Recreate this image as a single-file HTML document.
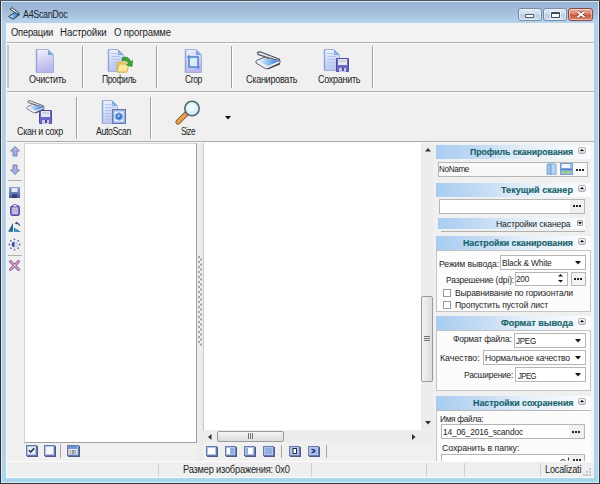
<!DOCTYPE html>
<html><head><meta charset="utf-8"><style>
html,body{margin:0;padding:0;width:600px;height:484px;overflow:hidden;background:#f0f0f0;font-family:"Liberation Sans", sans-serif;}
.t{position:absolute;line-height:1;white-space:pre;transform-origin:0 0;}
svg{overflow:visible}
</style></head><body>
<div style="position:absolute;left:0px;top:0px;width:600px;height:484px;background:#2c3238"></div>
<div style="position:absolute;left:0px;top:0px;width:600px;height:1px;background:#50565e"></div>
<div style="position:absolute;left:1px;top:1px;width:598px;height:482px;background:#dde9f4"></div>
<div style="position:absolute;left:2px;top:2px;width:596px;height:480px;background:linear-gradient(#b4cfe8 0%,#b4d0e8 95%,#a6d8ec 100%)"></div>
<div style="position:absolute;left:2px;top:2px;width:596px;height:21px;background:linear-gradient(#94b4d4 0%,#a4bcd8 45%,#accae4 75%,#b6d4ee 100%)"></div>
<div style="position:absolute;left:6px;top:23px;width:588px;height:455px;background:#f0f0f0"></div>
<svg style="position:absolute;left:8px;top:7px" width="12" height="13" viewBox="0 0 12 13"><defs><linearGradient id="tig" x1="0" y1="0" x2="1" y2="0"><stop offset="0" stop-color="#f4f8fc"/><stop offset="0.5" stop-color="#6aa8ec"/><stop offset="1" stop-color="#1a5ac8"/></linearGradient></defs>
<path d="M2 2 L4 0.7 L11.3 6.3 L9.8 7.6 Z" fill="#f0f2f6" stroke="#2e3a4c" stroke-width="1"/>
<path d="M0.6 9.6 L6.8 5.6 L11.4 7.8 L5.2 12.2 Z" fill="url(#tig)" stroke="#2e3a4c" stroke-width="1"/></svg>
<div style="position:absolute;left:518px;top:8px;width:24px;height:13px;box-sizing:border-box;border:1px solid #7a8ca4;border-radius:3px;background:linear-gradient(#dfe9f5 0%,#cfdcec 45%,#b9cde4 55%,#c9dcf0 100%);box-shadow:inset 0 0 0 1px rgba(255,255,255,0.45)"></div>
<div style="position:absolute;left:525px;top:14px;width:9px;height:4px;box-sizing:border-box;border:1px solid #4a5565;background:#fff;border-radius:1px"></div>
<div style="position:absolute;left:543px;top:8px;width:24px;height:13px;box-sizing:border-box;border:1px solid #7a8ca4;border-radius:3px;background:linear-gradient(#dfe9f5 0%,#cfdcec 45%,#b9cde4 55%,#c9dcf0 100%);box-shadow:inset 0 0 0 1px rgba(255,255,255,0.45)"></div>
<div style="position:absolute;left:551px;top:12px;width:9px;height:6px;box-sizing:border-box;border:1px solid #3e4a5a;border-top-width:2px;background:#fff;border-radius:1px"></div>
<div style="position:absolute;left:550px;top:11px;width:11px;height:8px;box-sizing:border-box;border:1px solid rgba(255,255,255,0.6);border-radius:1px"></div>
<div style="position:absolute;left:568px;top:8px;width:25px;height:13px;box-sizing:border-box;border:1px solid #8a4a40;border-radius:3px;background:linear-gradient(#eab0a0 0%,#dc8670 45%,#c9553a 55%,#dc8a72 100%);box-shadow:inset 0 0 0 1px rgba(255,255,255,0.45)"></div>
<svg style="position:absolute;left:576px;top:11px" width="10" height="7" viewBox="0 0 10 7"><path d="M1.5 0.8 L8.5 6.2 M8.5 0.8 L1.5 6.2" stroke="#6a3a30" stroke-width="3"/><path d="M1.5 0.8 L8.5 6.2 M8.5 0.8 L1.5 6.2" stroke="#fff" stroke-width="1.8"/></svg>
<div style="position:absolute;left:6px;top:23px;width:588px;height:19px;background:#f3f3f3"></div>
<div style="position:absolute;left:6px;top:42px;width:588px;height:1px;background:#b0b0b0"></div>
<div style="position:absolute;left:6px;top:43px;width:588px;height:1px;background:#fbfbfb"></div>
<div style="position:absolute;left:6px;top:44px;width:588px;height:47px;background:#f0f0f0"></div>
<div style="position:absolute;left:7px;top:45px;width:2px;height:43px;background:#c4c4c4"></div>
<div style="position:absolute;left:82px;top:46px;width:1px;height:42px;background:#a0a0a0"></div>
<div style="position:absolute;left:83px;top:46px;width:1px;height:42px;background:#fff"></div>
<div style="position:absolute;left:156px;top:46px;width:1px;height:42px;background:#a0a0a0"></div>
<div style="position:absolute;left:157px;top:46px;width:1px;height:42px;background:#fff"></div>
<div style="position:absolute;left:231px;top:46px;width:1px;height:42px;background:#a0a0a0"></div>
<div style="position:absolute;left:232px;top:46px;width:1px;height:42px;background:#fff"></div>
<div style="position:absolute;left:372px;top:46px;width:1px;height:42px;background:#a0a0a0"></div>
<div style="position:absolute;left:373px;top:46px;width:1px;height:42px;background:#fff"></div>
<div style="position:absolute;left:6px;top:91px;width:588px;height:1px;background:#b0b0b0"></div>
<div style="position:absolute;left:6px;top:92px;width:588px;height:1px;background:#fbfbfb"></div>
<div style="position:absolute;left:76px;top:97px;width:1px;height:42px;background:#a0a0a0"></div>
<div style="position:absolute;left:77px;top:97px;width:1px;height:42px;background:#fff"></div>
<div style="position:absolute;left:150px;top:97px;width:1px;height:42px;background:#a0a0a0"></div>
<div style="position:absolute;left:151px;top:97px;width:1px;height:42px;background:#fff"></div>
<div style="position:absolute;left:6px;top:141px;width:588px;height:1px;background:#aaaaaa"></div>
<div style="position:absolute;left:6px;top:142px;width:588px;height:1px;background:#fafafa"></div>
<svg style="position:absolute;left:225px;top:116px" width="7" height="4" viewBox="0 0 7 4"><path d="M0 0 H6 L3 3.5 Z" fill="#111"/></svg>
<div style="position:absolute;left:6px;top:143px;width:17px;height:318px;background:#f0f0f0"></div>
<div style="position:absolute;left:24px;top:143px;width:173px;height:300px;box-sizing:border-box;border:1px solid #a0a0a0;border-top-color:#d4d4d4;border-left-color:#d4d4d4;background:#fff"></div>
<div style="position:absolute;left:197px;top:143px;width:6px;height:318px;background:#ececec"></div>
<div style="position:absolute;left:196px;top:143px;width:1px;height:300px;background:#a0a0a0"></div>
<div style="position:absolute;left:203px;top:143px;width:1px;height:288px;background:#c8c8c8"></div>
<svg style="position:absolute;left:198px;top:256px" width="4" height="92" viewBox="0 0 4 92"><rect x="0" y="0.0" width="2" height="2" fill="#a4a4a4"/><rect x="2" y="2.5" width="2" height="2" fill="#a4a4a4"/><rect x="0" y="5.0" width="2" height="2" fill="#a4a4a4"/><rect x="2" y="7.5" width="2" height="2" fill="#a4a4a4"/><rect x="0" y="10.0" width="2" height="2" fill="#a4a4a4"/><rect x="2" y="12.5" width="2" height="2" fill="#a4a4a4"/><rect x="0" y="15.0" width="2" height="2" fill="#a4a4a4"/><rect x="2" y="17.5" width="2" height="2" fill="#a4a4a4"/><rect x="0" y="20.0" width="2" height="2" fill="#a4a4a4"/><rect x="2" y="22.5" width="2" height="2" fill="#a4a4a4"/><rect x="0" y="25.0" width="2" height="2" fill="#a4a4a4"/><rect x="2" y="27.5" width="2" height="2" fill="#a4a4a4"/><rect x="0" y="30.0" width="2" height="2" fill="#a4a4a4"/><rect x="2" y="32.5" width="2" height="2" fill="#a4a4a4"/><rect x="0" y="35.0" width="2" height="2" fill="#a4a4a4"/><rect x="2" y="37.5" width="2" height="2" fill="#a4a4a4"/><rect x="0" y="40.0" width="2" height="2" fill="#a4a4a4"/><rect x="2" y="42.5" width="2" height="2" fill="#a4a4a4"/><rect x="0" y="45.0" width="2" height="2" fill="#a4a4a4"/><rect x="2" y="47.5" width="2" height="2" fill="#a4a4a4"/><rect x="0" y="50.0" width="2" height="2" fill="#a4a4a4"/><rect x="2" y="52.5" width="2" height="2" fill="#a4a4a4"/><rect x="0" y="55.0" width="2" height="2" fill="#a4a4a4"/><rect x="2" y="57.5" width="2" height="2" fill="#a4a4a4"/><rect x="0" y="60.0" width="2" height="2" fill="#a4a4a4"/><rect x="2" y="62.5" width="2" height="2" fill="#a4a4a4"/><rect x="0" y="65.0" width="2" height="2" fill="#a4a4a4"/><rect x="2" y="67.5" width="2" height="2" fill="#a4a4a4"/><rect x="0" y="70.0" width="2" height="2" fill="#a4a4a4"/><rect x="2" y="72.5" width="2" height="2" fill="#a4a4a4"/><rect x="0" y="75.0" width="2" height="2" fill="#a4a4a4"/><rect x="2" y="77.5" width="2" height="2" fill="#a4a4a4"/><rect x="0" y="80.0" width="2" height="2" fill="#a4a4a4"/><rect x="2" y="82.5" width="2" height="2" fill="#a4a4a4"/><rect x="0" y="85.0" width="2" height="2" fill="#a4a4a4"/><rect x="2" y="87.5" width="2" height="2" fill="#a4a4a4"/></svg>
<div style="position:absolute;left:204px;top:143px;width:217px;height:287px;background:#fff"></div>
<div style="position:absolute;left:421px;top:143px;width:12px;height:287px;background:#ececec"></div>
<svg style="position:absolute;left:425px;top:148px" width="6" height="4" viewBox="0 0 6 4"><path d="M0 3.5 H6 L3 0 Z" fill="#333"/></svg>
<svg style="position:absolute;left:425px;top:421px" width="6" height="4" viewBox="0 0 6 4"><path d="M0 0 H6 L3 3.5 Z" fill="#333"/></svg>
<div style="position:absolute;left:421px;top:296px;width:12px;height:86px;box-sizing:border-box;border:1px solid #9a9a9a;border-radius:2px;background:linear-gradient(90deg,#f4f4f4,#dcdcdc)"></div>
<div style="position:absolute;left:424px;top:336px;width:6px;height:1px;background:#707070"></div>
<div style="position:absolute;left:424px;top:338px;width:6px;height:1px;background:#707070"></div>
<div style="position:absolute;left:424px;top:340px;width:6px;height:1px;background:#707070"></div>
<div style="position:absolute;left:204px;top:430px;width:217px;height:12px;background:#ececec"></div>
<div style="position:absolute;left:421px;top:430px;width:12px;height:12px;background:#ececec"></div>
<svg style="position:absolute;left:208px;top:434px" width="4" height="6" viewBox="0 0 4 6"><path d="M3.5 0 V6 L0 3 Z" fill="#333"/></svg>
<svg style="position:absolute;left:412px;top:434px" width="4" height="6" viewBox="0 0 4 6"><path d="M0 0 V6 L3.5 3 Z" fill="#333"/></svg>
<div style="position:absolute;left:217px;top:431px;width:67px;height:11px;box-sizing:border-box;border:1px solid #9a9a9a;border-radius:2px;background:linear-gradient(#f4f4f4,#dcdcdc)"></div>
<div style="position:absolute;left:248px;top:433px;width:1px;height:6px;background:#707070"></div>
<div style="position:absolute;left:250px;top:433px;width:1px;height:6px;background:#707070"></div>
<div style="position:absolute;left:252px;top:433px;width:1px;height:6px;background:#707070"></div>
<div style="position:absolute;left:433px;top:143px;width:161px;height:318px;background:#f0f0f0"></div>
<div style="position:absolute;left:591px;top:143px;width:3px;height:318px;background:#f6f6f6"></div>
<div style="position:absolute;left:436px;top:145px;width:155px;height:14px;background:linear-gradient(90deg,#a8ccf0 0%,#c4dcf4 30%,#e6f0f9 60%,#fcfdfe 100%)"></div>
<div style="position:absolute;left:578px;top:147px;width:8px;height:7px;box-sizing:border-box;border:1px solid #b4b8bc;border-radius:2px;background:linear-gradient(#fafafa 0%,#e8e8e8 50%,#c8c8c8 100%)"></div>
<svg style="position:absolute;left:580px;top:149px" width="4" height="2" viewBox="0 0 4 2"><path d="M0 2 H4 L2 0 Z" fill="#000"/></svg>
<div style="position:absolute;left:438px;top:162px;width:150px;height:15px;box-sizing:border-box;border:1px solid #b6b6b6;background:#f8f8f8"></div>
<svg style="position:absolute;left:546px;top:163px" width="11" height="12" viewBox="0 0 11 12"><path d="M1 1.5 Q3 0 5 1 V11.5 Q3 10.5 1 11.5 Z" fill="#9cc4e8" stroke="#6a9ac8" stroke-width="0.8"/><path d="M5 1 Q7.5 0 10 1.5 V11.5 Q7.5 10.5 5 11.5 Z" fill="#b8d8f4" stroke="#6a9ac8" stroke-width="0.8"/></svg>
<svg style="position:absolute;left:560px;top:163px" width="13" height="12" viewBox="0 0 13 12"><rect x="0.5" y="0.5" width="12" height="11" fill="#9cc0ec" stroke="#7a9ed0" stroke-width="1"/><rect x="2" y="1" width="8" height="4" fill="#f4f8fc"/><rect x="1" y="5.5" width="11" height="2" fill="#5a88c8"/><rect x="2.5" y="8" width="8" height="2.5" fill="#9cd078"/></svg>
<div style="position:absolute;left:576px;top:169px;width:2px;height:2px;background:#222"></div>
<div style="position:absolute;left:579px;top:169px;width:2px;height:2px;background:#222"></div>
<div style="position:absolute;left:582px;top:169px;width:2px;height:2px;background:#222"></div>
<div style="position:absolute;left:436px;top:183px;width:155px;height:14px;background:linear-gradient(90deg,#a8ccf0 0%,#c4dcf4 30%,#e6f0f9 60%,#fcfdfe 100%)"></div>
<div style="position:absolute;left:578px;top:185px;width:8px;height:7px;box-sizing:border-box;border:1px solid #b4b8bc;border-radius:2px;background:linear-gradient(#fafafa 0%,#e8e8e8 50%,#c8c8c8 100%)"></div>
<svg style="position:absolute;left:580px;top:187px" width="4" height="2" viewBox="0 0 4 2"><path d="M0 2 H4 L2 0 Z" fill="#000"/></svg>
<div style="position:absolute;left:439px;top:199px;width:146px;height:15px;box-sizing:border-box;border:1px solid #b6b6b6;background:#fff"></div>
<div style="position:absolute;left:570px;top:200px;width:14px;height:13px;background:#f0f0f0"></div>
<div style="position:absolute;left:573px;top:205px;width:2px;height:2px;background:#222"></div>
<div style="position:absolute;left:576px;top:205px;width:2px;height:2px;background:#222"></div>
<div style="position:absolute;left:579px;top:205px;width:2px;height:2px;background:#222"></div>
<div style="position:absolute;left:438px;top:218px;width:147px;height:11px;background:linear-gradient(90deg,#a8ccf0 0%,#c4dcf4 30%,#e6f0f9 60%,#fcfdfe 100%)"></div>
<div style="position:absolute;left:577px;top:220px;width:6px;height:6px;box-sizing:border-box;border:1px solid #9aa0a8;border-radius:1px;background:#eee"></div>
<svg style="position:absolute;left:578px;top:222px" width="4" height="3" viewBox="0 0 4 3"><path d="M0 0 H4 L2 2.5 Z" fill="#111"/></svg>
<div style="position:absolute;left:441px;top:231px;width:144px;height:1px;background:#b0b0b0"></div>
<div style="position:absolute;left:436px;top:236px;width:155px;height:14px;background:linear-gradient(90deg,#a8ccf0 0%,#c4dcf4 30%,#e6f0f9 60%,#fcfdfe 100%)"></div>
<div style="position:absolute;left:578px;top:238px;width:8px;height:7px;box-sizing:border-box;border:1px solid #b4b8bc;border-radius:2px;background:linear-gradient(#fafafa 0%,#e8e8e8 50%,#c8c8c8 100%)"></div>
<svg style="position:absolute;left:580px;top:240px" width="4" height="2" viewBox="0 0 4 2"><path d="M0 2 H4 L2 0 Z" fill="#000"/></svg>
<div style="position:absolute;left:436px;top:250px;width:155px;height:62px;box-sizing:border-box;border:1px solid #c4c4c4;background:#fcfcfc"></div>
<div style="position:absolute;left:500px;top:255px;width:86px;height:15px;box-sizing:border-box;border:1px solid #b6b6b6;background:#fff"></div>
<svg style="position:absolute;left:575px;top:261px" width="6" height="4" viewBox="0 0 6 4"><path d="M0 0 H6 L3 3.5 Z" fill="#111"/></svg>
<div style="position:absolute;left:515px;top:272px;width:53px;height:14px;box-sizing:border-box;border:1px solid #b6b6b6;background:#fff"></div>
<svg style="position:absolute;left:558px;top:274px" width="5" height="3" viewBox="0 0 5 3"><path d="M0 2.5 H5 L2.5 0 Z" fill="#111"/></svg>
<svg style="position:absolute;left:558px;top:280px" width="5" height="3" viewBox="0 0 5 3"><path d="M0 0 H5 L2.5 2.5 Z" fill="#111"/></svg>
<div style="position:absolute;left:571px;top:272px;width:15px;height:14px;box-sizing:border-box;border:1px solid #b6b6b6;background:#f4f4f4"></div>
<div style="position:absolute;left:574px;top:278px;width:2px;height:2px;background:#222"></div>
<div style="position:absolute;left:577px;top:278px;width:2px;height:2px;background:#222"></div>
<div style="position:absolute;left:580px;top:278px;width:2px;height:2px;background:#222"></div>
<div style="position:absolute;left:443px;top:289px;width:8px;height:8px;box-sizing:border-box;border:1px solid #9a9a9a;background:#fff"></div>
<div style="position:absolute;left:443px;top:301px;width:8px;height:8px;box-sizing:border-box;border:1px solid #9a9a9a;background:#fff"></div>
<div style="position:absolute;left:436px;top:316px;width:155px;height:14px;background:linear-gradient(90deg,#a8ccf0 0%,#c4dcf4 30%,#e6f0f9 60%,#fcfdfe 100%)"></div>
<div style="position:absolute;left:578px;top:318px;width:8px;height:7px;box-sizing:border-box;border:1px solid #b4b8bc;border-radius:2px;background:linear-gradient(#fafafa 0%,#e8e8e8 50%,#c8c8c8 100%)"></div>
<svg style="position:absolute;left:580px;top:320px" width="4" height="2" viewBox="0 0 4 2"><path d="M0 2 H4 L2 0 Z" fill="#000"/></svg>
<div style="position:absolute;left:436px;top:330px;width:155px;height:61px;box-sizing:border-box;border:1px solid #c4c4c4;background:#fcfcfc"></div>
<div style="position:absolute;left:514px;top:333px;width:72px;height:15px;box-sizing:border-box;border:1px solid #b6b6b6;background:#fff"></div>
<svg style="position:absolute;left:575px;top:339px" width="6" height="4" viewBox="0 0 6 4"><path d="M0 0 H6 L3 3.5 Z" fill="#111"/></svg>
<div style="position:absolute;left:483px;top:350px;width:103px;height:15px;box-sizing:border-box;border:1px solid #b6b6b6;background:#fff"></div>
<svg style="position:absolute;left:575px;top:356px" width="6" height="4" viewBox="0 0 6 4"><path d="M0 0 H6 L3 3.5 Z" fill="#111"/></svg>
<div style="position:absolute;left:515px;top:367px;width:71px;height:15px;box-sizing:border-box;border:1px solid #b6b6b6;background:#fff"></div>
<svg style="position:absolute;left:575px;top:373px" width="6" height="4" viewBox="0 0 6 4"><path d="M0 0 H6 L3 3.5 Z" fill="#111"/></svg>
<div style="position:absolute;left:436px;top:396px;width:155px;height:14px;background:linear-gradient(90deg,#a8ccf0 0%,#c4dcf4 30%,#e6f0f9 60%,#fcfdfe 100%)"></div>
<div style="position:absolute;left:578px;top:398px;width:8px;height:7px;box-sizing:border-box;border:1px solid #b4b8bc;border-radius:2px;background:linear-gradient(#fafafa 0%,#e8e8e8 50%,#c8c8c8 100%)"></div>
<svg style="position:absolute;left:580px;top:400px" width="4" height="2" viewBox="0 0 4 2"><path d="M0 2 H4 L2 0 Z" fill="#000"/></svg>
<div style="position:absolute;left:436px;top:410px;width:155px;height:51px;box-sizing:border-box;border:1px solid #c8c8c8;border-top-color:#b8b8b8;border-right:none;border-bottom:none;background:#fbfbfb"></div>
<div style="position:absolute;left:441px;top:424px;width:144px;height:15px;box-sizing:border-box;border:1px solid #b6b6b6;background:#fff"></div>
<div style="position:absolute;left:569px;top:425px;width:15px;height:13px;background:#f0f0f0"></div>
<div style="position:absolute;left:572px;top:431px;width:2px;height:2px;background:#222"></div>
<div style="position:absolute;left:575px;top:431px;width:2px;height:2px;background:#222"></div>
<div style="position:absolute;left:578px;top:431px;width:2px;height:2px;background:#222"></div>
<div style="position:absolute;left:441px;top:454px;width:144px;height:8px;box-sizing:border-box;border:1px solid #b6b6b6;border-bottom:none;background:#fff"></div>
<div style="position:absolute;left:569px;top:455px;width:15px;height:6px;background:#f0f0f0"></div>
<div style="position:absolute;left:573px;top:459px;width:2px;height:2px;background:#333"></div>
<div style="position:absolute;left:576px;top:459px;width:2px;height:2px;background:#333"></div>
<div style="position:absolute;left:579px;top:459px;width:2px;height:2px;background:#333"></div>
<svg style="position:absolute;left:560px;top:457px" width="10" height="4" viewBox="0 0 10 4"><path d="M0.5 3.5 Q3 1.5 5.5 3.5 M8.5 0.5 V3.5" stroke="#333" stroke-width="1" fill="none"/></svg>
<svg style="position:absolute;left:26px;top:445px" width="12" height="12" viewBox="0 0 12 12"><rect x="1" y="1" width="11" height="11" fill="#4a5a8a"/>
<rect x="0.5" y="0.5" width="10" height="10" fill="#dfe6f6" stroke="#6a7aa8" stroke-width="1"/>
<rect x="1.5" y="1.5" width="8" height="8" fill="none" stroke="#b4c4ea" stroke-width="1"/><rect x="2" y="2" width="7" height="7" fill="#e8eefa"/><path d="M2.8 5.2 L4.6 7 L8.2 3.2" stroke="#2a3450" stroke-width="1.6" fill="none"/></svg>
<svg style="position:absolute;left:44px;top:445px" width="12" height="12" viewBox="0 0 12 12"><rect x="1" y="1" width="11" height="11" fill="#4a5a8a"/>
<rect x="0.5" y="0.5" width="10" height="10" fill="#dfe6f6" stroke="#6a7aa8" stroke-width="1"/>
<rect x="1.5" y="1.5" width="8" height="8" fill="none" stroke="#b4c4ea" stroke-width="1"/><rect x="2" y="2" width="7" height="7" fill="#f4f6fc"/></svg>
<div style="position:absolute;left:60px;top:444px;width:1px;height:14px;background:#a8a8a8"></div>
<svg style="position:absolute;left:67px;top:445px" width="13" height="12" viewBox="0 0 13 12"><rect x="1" y="1" width="12" height="11" fill="#4a5a8a"/>
<rect x="0.5" y="0.5" width="11" height="10" fill="#dfe6f6" stroke="#6a7aa8" stroke-width="1"/>
<rect x="1.5" y="1.5" width="9" height="8" fill="none" stroke="#b4c4ea" stroke-width="1"/><rect x="1" y="1" width="9" height="3" fill="#6a94d4"/><rect x="2" y="4" width="7" height="5" fill="#f0f4fc"/><rect x="2.5" y="5" width="2" height="1.6" fill="#e08a70"/><rect x="5" y="5" width="2" height="1.6" fill="#5a80c8"/><rect x="7.3" y="5" width="1.6" height="1.6" fill="#6ab06a"/><rect x="2.5" y="7.2" width="2" height="1.6" fill="#d8a040"/><rect x="5" y="7.2" width="2" height="1.6" fill="#5a80c8"/><rect x="7.3" y="7.2" width="1.6" height="1.6" fill="#6ab06a"/></svg>
<svg style="position:absolute;left:206px;top:446px" width="12" height="11" viewBox="0 0 12 11"><rect x="1" y="1" width="11" height="10" fill="#4a5a8a"/>
<rect x="0.5" y="0.5" width="10" height="9" fill="#dfe6f6" stroke="#6a7aa8" stroke-width="1"/>
<rect x="1.5" y="1.5" width="8" height="7" fill="none" stroke="#b4c4ea" stroke-width="1"/><rect x="2" y="2" width="7" height="6" fill="#fff"/></svg>
<svg style="position:absolute;left:225px;top:446px" width="12" height="11" viewBox="0 0 12 11"><rect x="1" y="1" width="11" height="10" fill="#4a5a8a"/>
<rect x="0.5" y="0.5" width="10" height="9" fill="#dfe6f6" stroke="#6a7aa8" stroke-width="1"/>
<rect x="1.5" y="1.5" width="8" height="7" fill="none" stroke="#b4c4ea" stroke-width="1"/><rect x="2" y="2" width="3" height="6" fill="#fff"/><rect x="5" y="2" width="4" height="6" fill="#8eaee4"/></svg>
<svg style="position:absolute;left:244px;top:446px" width="12" height="11" viewBox="0 0 12 11"><rect x="1" y="1" width="11" height="10" fill="#4a5a8a"/>
<rect x="0.5" y="0.5" width="10" height="9" fill="#dfe6f6" stroke="#6a7aa8" stroke-width="1"/>
<rect x="1.5" y="1.5" width="8" height="7" fill="none" stroke="#b4c4ea" stroke-width="1"/><rect x="2" y="2" width="2" height="6" fill="#8eaee4"/><rect x="4" y="2" width="4" height="6" fill="#fff"/></svg>
<svg style="position:absolute;left:263px;top:446px" width="12" height="11" viewBox="0 0 12 11"><rect x="1" y="1" width="11" height="10" fill="#4a5a8a"/>
<rect x="0.5" y="0.5" width="10" height="9" fill="#dfe6f6" stroke="#6a7aa8" stroke-width="1"/>
<rect x="1.5" y="1.5" width="8" height="7" fill="none" stroke="#b4c4ea" stroke-width="1"/><rect x="2" y="2" width="7" height="6" fill="#8eaee4"/></svg>
<div style="position:absolute;left:281px;top:445px;width:1px;height:13px;background:#a8a8a8"></div>
<svg style="position:absolute;left:289px;top:446px" width="12" height="11" viewBox="0 0 12 11"><rect x="1" y="1" width="11" height="10" fill="#4a5a8a"/>
<rect x="0.5" y="0.5" width="10" height="9" fill="#dfe6f6" stroke="#6a7aa8" stroke-width="1"/>
<rect x="1.5" y="1.5" width="8" height="7" fill="none" stroke="#b4c4ea" stroke-width="1"/><rect x="2" y="2" width="7" height="6" fill="#a8c0ec"/><rect x="4" y="2.5" width="3.5" height="5" fill="#fff" stroke="#2a3450" stroke-width="1"/></svg>
<svg style="position:absolute;left:308px;top:446px" width="12" height="11" viewBox="0 0 12 11"><rect x="1" y="1" width="11" height="10" fill="#4a5a8a"/>
<rect x="0.5" y="0.5" width="10" height="9" fill="#dfe6f6" stroke="#6a7aa8" stroke-width="1"/>
<rect x="1.5" y="1.5" width="8" height="7" fill="none" stroke="#b4c4ea" stroke-width="1"/><rect x="2" y="2" width="7" height="6" fill="#a8c0ec"/><path d="M3.5 3 L7 5 L3.5 7 M6 3 V7" stroke="#2a3a70" stroke-width="1.2" fill="none"/></svg>
<div style="position:absolute;left:326px;top:445px;width:1px;height:13px;background:#a8a8a8"></div>
<div style="position:absolute;left:6px;top:461px;width:588px;height:1px;background:#fcfcfc"></div>
<div style="position:absolute;left:6px;top:462px;width:588px;height:15px;background:#efefef"></div>
<div style="position:absolute;left:6px;top:477px;width:588px;height:1px;background:#fcfcfc"></div>
<div style="position:absolute;left:158px;top:463px;width:1px;height:14px;background:#d0d0d0"></div>
<div style="position:absolute;left:311px;top:463px;width:1px;height:14px;background:#d0d0d0"></div>
<div style="position:absolute;left:426px;top:463px;width:1px;height:14px;background:#d0d0d0"></div>
<div style="position:absolute;left:464px;top:463px;width:1px;height:14px;background:#d0d0d0"></div>
<div style="position:absolute;left:540px;top:463px;width:1px;height:14px;background:#d0d0d0"></div>
<div style="position:absolute;left:589px;top:468px;width:2px;height:2px;background:#c4c4c4"></div>
<div style="position:absolute;left:586px;top:471px;width:2px;height:2px;background:#c4c4c4"></div>
<div style="position:absolute;left:589px;top:471px;width:2px;height:2px;background:#c4c4c4"></div>
<div style="position:absolute;left:583px;top:474px;width:2px;height:2px;background:#c4c4c4"></div>
<div style="position:absolute;left:586px;top:474px;width:2px;height:2px;background:#c4c4c4"></div>
<div style="position:absolute;left:589px;top:474px;width:2px;height:2px;background:#c4c4c4"></div>
<div style="position:absolute;left:6px;top:23px;width:1px;height:455px;background:#f6f8fa"></div>
<svg style="position:absolute;left:36px;top:49px" width="18" height="24" viewBox="0 0 18 24"><defs><linearGradient id="g36_49" x1="0" y1="0" x2="0.3" y2="1">
<stop offset="0" stop-color="#f4f4fc"/><stop offset="1" stop-color="#b8b4ee"/></linearGradient></defs>
<path d="M0.5 0.5 H12 L17.5 6 V23.5 H0.5 Z" fill="url(#g36_49)" stroke="#a8b0d8" stroke-width="1"/>
<path d="M0.5 0.5 V23.5" stroke="#8ea6d6" stroke-width="1.5"/>
<path d="M12 0.5 V6 H17.5 Z" fill="#7aa6dc"/></svg>
<svg style="position:absolute;left:108px;top:49px" width="16" height="23" viewBox="0 0 16 23"><defs><linearGradient id="g108_49" x1="0" y1="0" x2="0.3" y2="1">
<stop offset="0" stop-color="#eef6fe"/><stop offset="1" stop-color="#bcc6f0"/></linearGradient></defs>
<path d="M0.5 0.5 H10 L15.5 6 V22.5 H0.5 Z" fill="url(#g108_49)" stroke="#a8b0d8" stroke-width="1"/>
<path d="M0.5 0.5 V22.5" stroke="#8ea6d6" stroke-width="1.5"/>
<path d="M10 0.5 V6 H15.5 Z" fill="#7aa6dc"/><path d="M3 4.5 H12" stroke="#b4c4ec" stroke-width="1"/><path d="M3 7.5 H12" stroke="#b4c4ec" stroke-width="1"/><path d="M3 10.5 H12" stroke="#b4c4ec" stroke-width="1"/><path d="M3 13.5 H12" stroke="#b4c4ec" stroke-width="1"/><path d="M3 16.5 H12" stroke="#b4c4ec" stroke-width="1"/><path d="M3 19.5 H12" stroke="#b4c4ec" stroke-width="1"/></svg>
<svg style="position:absolute;left:116px;top:56px" width="17" height="17" viewBox="0 0 17 17"><path d="M1 6 H5 L6 5 H10 V16 H1 Z" fill="#e8d27a" stroke="#c8a848" stroke-width="0.8"/>
<path d="M1 16 L3 8 H13 L11 16 Z" fill="#f8e89a" stroke="#c8a848" stroke-width="0.8"/>
<path d="M6 2 Q12 -1 15 6 L16.5 4.5 L16 10.5 L10.5 9 L12.5 7.5 Q11 3 6 4.5 Z" fill="#3aa83a" stroke="#2a7a2a" stroke-width="0.7"/></svg>
<svg style="position:absolute;left:185px;top:49px" width="17" height="24" viewBox="0 0 17 24"><defs><linearGradient id="g185_49" x1="0" y1="0" x2="0.3" y2="1">
<stop offset="0" stop-color="#f4f4fc"/><stop offset="1" stop-color="#b8b4ee"/></linearGradient></defs>
<path d="M0.5 0.5 H11 L16.5 6 V23.5 H0.5 Z" fill="url(#g185_49)" stroke="#a8b0d8" stroke-width="1"/>
<path d="M0.5 0.5 V23.5" stroke="#8ea6d6" stroke-width="1.5"/>
<path d="M11 0.5 V6 H16.5 Z" fill="#7aa6dc"/></svg>
<svg style="position:absolute;left:187px;top:55px" width="14" height="15" viewBox="0 0 14 15"><rect x="2" y="2" width="9" height="10" fill="#dceaf8" stroke="#5a8ccc" stroke-width="1.7"/><path d="M0 2 H2 M11 12 V14 M2 0 V2 M11 12 H13" stroke="#5a8ccc" stroke-width="1.3"/></svg>
<svg style="position:absolute;left:255px;top:51px" width="27" height="20" viewBox="0 0 27 20"><g transform="scale(1.0)">
<defs><linearGradient id="sg255" x1="0" y1="0" x2="1" y2="0"><stop offset="0" stop-color="#e8f0f8"/><stop offset="0.45" stop-color="#8cc0ec"/><stop offset="1" stop-color="#2a6ad0"/></linearGradient></defs>
<path d="M2.5 1.8 Q3.5 0.5 6 1 L24.5 8.2 L23.5 10 L3 3.6 Z" fill="#dcdee6" stroke="#4a5064" stroke-width="1.1"/>
<path d="M1 12 Q0 10 2.5 9 L9 6.5 L25 9.5 L25 12 L13 17.5 Q10.5 18.5 8.5 16.5 Z" fill="#eceef2" stroke="#5a6070" stroke-width="1"/>
<path d="M4 10.5 L10 7.8 L24.5 10 L13 15 Z" fill="url(#sg255)"/>
<path d="M13 17.5 L25 12 V13.5 L13 18.6 Z" fill="#3a4050"/>
</g></svg>
<svg style="position:absolute;left:324px;top:49px" width="16" height="22" viewBox="0 0 16 22"><defs><linearGradient id="g324_49" x1="0" y1="0" x2="0.3" y2="1">
<stop offset="0" stop-color="#eef6fe"/><stop offset="1" stop-color="#bcc6f0"/></linearGradient></defs>
<path d="M0.5 0.5 H10 L15.5 6 V21.5 H0.5 Z" fill="url(#g324_49)" stroke="#a8b0d8" stroke-width="1"/>
<path d="M0.5 0.5 V21.5" stroke="#8ea6d6" stroke-width="1.5"/>
<path d="M10 0.5 V6 H15.5 Z" fill="#7aa6dc"/><path d="M3 4.5 H12" stroke="#b4c4ec" stroke-width="1"/><path d="M3 7.5 H12" stroke="#b4c4ec" stroke-width="1"/><path d="M3 10.5 H12" stroke="#b4c4ec" stroke-width="1"/><path d="M3 13.5 H12" stroke="#b4c4ec" stroke-width="1"/><path d="M3 16.5 H12" stroke="#b4c4ec" stroke-width="1"/></svg>
<svg style="position:absolute;left:336px;top:58px" width="13" height="14" viewBox="0 0 13 14"><rect x="0" y="0" width="13" height="14" rx="1" fill="#6e68c4"/>
<rect x="0.5" y="0.5" width="12" height="13" rx="1" fill="none" stroke="#4a4aa0" stroke-width="1"/>
<rect x="2" y="1" width="9" height="6" fill="#e4e8f0"/>
<path d="M3 3 H10" stroke="#b0b8c8" stroke-width="1"/>
<rect x="3" y="10" width="7" height="4" fill="#c8c8e8"/>
<rect x="6" y="10" width="2" height="3" fill="#4a4aa0"/></svg>
<svg style="position:absolute;left:26px;top:100px" width="19" height="14" viewBox="0 0 19 14"><g transform="scale(0.72)">
<defs><linearGradient id="sg26" x1="0" y1="0" x2="1" y2="0"><stop offset="0" stop-color="#e8f0f8"/><stop offset="0.45" stop-color="#8cc0ec"/><stop offset="1" stop-color="#2a6ad0"/></linearGradient></defs>
<path d="M2.5 1.8 Q3.5 0.5 6 1 L24.5 8.2 L23.5 10 L3 3.6 Z" fill="#dcdee6" stroke="#4a5064" stroke-width="1.1"/>
<path d="M1 12 Q0 10 2.5 9 L9 6.5 L25 9.5 L25 12 L13 17.5 Q10.5 18.5 8.5 16.5 Z" fill="#eceef2" stroke="#5a6070" stroke-width="1"/>
<path d="M4 10.5 L10 7.8 L24.5 10 L13 15 Z" fill="url(#sg26)"/>
<path d="M13 17.5 L25 12 V13.5 L13 18.6 Z" fill="#3a4050"/>
</g></svg>
<svg style="position:absolute;left:39px;top:110px" width="13" height="14" viewBox="0 0 13 14"><rect x="0" y="0" width="13" height="14" rx="1" fill="#6e68c4"/>
<rect x="0.5" y="0.5" width="12" height="13" rx="1" fill="none" stroke="#4a4aa0" stroke-width="1"/>
<rect x="2" y="1" width="9" height="6" fill="#e4e8f0"/>
<path d="M3 3 H10" stroke="#b0b8c8" stroke-width="1"/>
<rect x="3" y="10" width="7" height="4" fill="#c8c8e8"/>
<rect x="6" y="10" width="2" height="3" fill="#4a4aa0"/></svg>
<svg style="position:absolute;left:102px;top:100px" width="16" height="24" viewBox="0 0 16 24"><defs><linearGradient id="g102_100" x1="0" y1="0" x2="0.3" y2="1">
<stop offset="0" stop-color="#eef6fe"/><stop offset="1" stop-color="#bcc6f0"/></linearGradient></defs>
<path d="M0.5 0.5 H10 L15.5 6 V23.5 H0.5 Z" fill="url(#g102_100)" stroke="#a8b0d8" stroke-width="1"/>
<path d="M0.5 0.5 V23.5" stroke="#8ea6d6" stroke-width="1.5"/>
<path d="M10 0.5 V6 H15.5 Z" fill="#7aa6dc"/><path d="M3 4.5 H12" stroke="#b4c4ec" stroke-width="1"/><path d="M3 7.5 H12" stroke="#b4c4ec" stroke-width="1"/><path d="M3 10.5 H12" stroke="#b4c4ec" stroke-width="1"/><path d="M3 13.5 H12" stroke="#b4c4ec" stroke-width="1"/><path d="M3 16.5 H12" stroke="#b4c4ec" stroke-width="1"/><path d="M3 19.5 H12" stroke="#b4c4ec" stroke-width="1"/></svg>
<svg style="position:absolute;left:112px;top:109px" width="14" height="15" viewBox="0 0 14 15"><rect x="0.5" y="0.5" width="13" height="14" fill="#9ab4e0" stroke="#6078b0" stroke-width="1"/>
<rect x="2.5" y="2.5" width="9" height="10" fill="#eef4fc"/>
<circle cx="7" cy="7.5" r="3.8" fill="#3a7ad8" stroke="#a8c0e8" stroke-width="1"/>
<path d="M7 5.5 V7.5 H5.5" stroke="#fff" stroke-width="0.9" fill="none"/></svg>
<svg style="position:absolute;left:174px;top:99px" width="28" height="26" viewBox="0 0 28 26"><path d="M4 23 L12 15" stroke="#7a4a20" stroke-width="5.2" stroke-linecap="round"/>
<path d="M4 23 L12 15" stroke="#e8a050" stroke-width="3.6" stroke-linecap="round"/>
<circle cx="18" cy="9.5" r="7.2" fill="#d4f0f8" stroke="#5a6470" stroke-width="1.6"/>
<circle cx="17" cy="8.5" r="4" fill="#eafaff"/></svg>
<svg style="position:absolute;left:10px;top:146px" width="10" height="11" viewBox="0 0 10 11"><path d="M5 0.5 L9.5 5 H7 V10 H3 V5 H0.5 Z" fill="#a8b0e0" stroke="#6a78b0" stroke-width="0.9"/></svg>
<svg style="position:absolute;left:10px;top:164px" width="10" height="11" viewBox="0 0 10 11"><path d="M5 10.5 L9.5 6 H7 V1 H3 V6 H0.5 Z" fill="#a8b0e0" stroke="#6a78b0" stroke-width="0.9"/></svg>
<div style="position:absolute;left:8px;top:180px;width:14px;height:1px;background:#b0b0b0"></div>
<svg style="position:absolute;left:9px;top:187px" width="11" height="11" viewBox="0 0 11 11"><defs><linearGradient id="lfg" x1="0" y1="0" x2="0" y2="1"><stop offset="0" stop-color="#8a9ed0"/><stop offset="1" stop-color="#4a5c9c"/></linearGradient></defs><rect x="0" y="0" width="11" height="11" rx="0.5" fill="url(#lfg)"/><rect x="2.5" y="1" width="6" height="4" fill="#e4eaf6"/><rect x="3" y="7.5" width="5" height="3.5" fill="#2e3c74"/></svg>
<svg style="position:absolute;left:10px;top:204px" width="10" height="12" viewBox="0 0 10 12"><rect x="0.7" y="2" width="8.6" height="9.3" rx="2" fill="#9890d0" stroke="#5446a8" stroke-width="1.3"/><rect x="2.2" y="3.5" width="5.6" height="6.5" fill="#cac4e4"/><path d="M3 5.5 H7 M3 7.5 H7" stroke="#a8a0c8" stroke-width="0.8"/><rect x="3" y="0.5" width="4" height="2.5" rx="1" fill="#e8e4f4" stroke="#6a5cb0" stroke-width="0.8"/></svg>
<svg style="position:absolute;left:8px;top:221px" width="14" height="12" viewBox="0 0 14 12"><path d="M0.2 10.8 L4.6 2.4 H5 V10.8 Z" fill="#1a6a9c"/><path d="M6 6.8 L12.9 10.8 H6 Z" fill="#1a6a9c"/><path d="M6.9 8.3 L9.6 9.8 H6.9 Z" fill="#8ac8e8"/><path d="M8.2 2.4 Q10 1.5 11.6 4.6" stroke="#2a4a80" stroke-width="1.3" fill="none"/><path d="M6.6 2.2 L9 0.6 L9 3.6 Z" fill="#2a4a80"/></svg>
<svg style="position:absolute;left:8px;top:238px" width="13" height="13" viewBox="0 0 13 13"><circle cx="6.5" cy="6.5" r="2.8" fill="#3a4a8a"/><path d="M6.5 3.7 A2.8 2.8 0 0 1 6.5 9.3 Z" fill="#d8e0f8"/><circle cx="11.70" cy="6.50" r="0.9" fill="#5a6ab8"/><circle cx="10.18" cy="10.18" r="0.9" fill="#5a6ab8"/><circle cx="6.50" cy="11.70" r="0.9" fill="#5a6ab8"/><circle cx="2.83" cy="10.18" r="0.9" fill="#5a6ab8"/><circle cx="1.30" cy="6.51" r="0.9" fill="#5a6ab8"/><circle cx="2.82" cy="2.83" r="0.9" fill="#5a6ab8"/><circle cx="6.49" cy="1.30" r="0.9" fill="#5a6ab8"/><circle cx="10.17" cy="2.81" r="0.9" fill="#5a6ab8"/></svg>
<div style="position:absolute;left:8px;top:255px;width:14px;height:1px;background:#b0b0b0"></div>
<svg style="position:absolute;left:9px;top:260px" width="11" height="11" viewBox="0 0 11 11"><path d="M1.5 1.5 L9.5 9.5 M9.5 1.5 L1.5 9.5" stroke="#7a4a7c" stroke-width="2.8" stroke-linecap="round"/><path d="M1.5 1.5 L9.5 9.5 M9.5 1.5 L1.5 9.5" stroke="#e4aed4" stroke-width="1.2" stroke-linecap="round"/></svg>
<span class="t" style="left:23.40px;top:10.04px;font-size:10px;font-weight:normal;color:#1b2633;letter-spacing:-0.378px;transform:scaleX(0.8966)">A4ScanDoc</span>
<span class="t" style="left:11.00px;top:28.04px;font-size:10px;font-weight:normal;color:#1e1e1e;letter-spacing:-0.239px;transform:scaleX(0.9361)">Операции</span>
<span class="t" style="left:60.00px;top:28.04px;font-size:10px;font-weight:normal;color:#1e1e1e;letter-spacing:-0.109px;transform:scaleX(0.9695)">Настройки</span>
<span class="t" style="left:113.50px;top:28.04px;font-size:10px;font-weight:normal;color:#1e1e1e;letter-spacing:-0.152px;transform:scaleX(0.9578)">О программе</span>
<span class="t" style="left:28.80px;top:75.03px;font-size:10px;font-weight:normal;color:#1e1e1e;letter-spacing:-0.327px;transform:scaleX(0.9042)">Очистить</span>
<span class="t" style="left:102.00px;top:75.03px;font-size:10px;font-weight:normal;color:#1e1e1e;letter-spacing:-0.524px;transform:scaleX(0.8607)">Профиль</span>
<span class="t" style="left:185.00px;top:75.03px;font-size:10px;font-weight:normal;color:#1e1e1e;letter-spacing:-0.469px;transform:scaleX(0.8580)">Crop</span>
<span class="t" style="left:245.80px;top:75.03px;font-size:10px;font-weight:normal;color:#1e1e1e;letter-spacing:-0.318px;transform:scaleX(0.9070)">Сканировать</span>
<span class="t" style="left:318.30px;top:75.03px;font-size:10px;font-weight:normal;color:#1e1e1e;letter-spacing:-0.333px;transform:scaleX(0.9036)">Сохранить</span>
<span class="t" style="left:16.70px;top:127.03px;font-size:10px;font-weight:normal;color:#1e1e1e;letter-spacing:-0.341px;transform:scaleX(0.8906)">Скан и сохр</span>
<span class="t" style="left:96.00px;top:127.03px;font-size:10px;font-weight:normal;color:#1e1e1e;letter-spacing:-0.419px;transform:scaleX(0.8745)">AutoScan</span>
<span class="t" style="left:180.50px;top:127.03px;font-size:10px;font-weight:normal;color:#1e1e1e;letter-spacing:-0.545px;transform:scaleX(0.8106)">Size</span>
<span class="t" style="left:470.00px;top:147.88px;font-size:9px;font-weight:bold;color:#19646c;letter-spacing:-0.095px;-webkit-text-stroke:0.15px currentColor;transform:scaleX(0.9731)">Профиль сканирования</span>
<span class="t" style="left:439.00px;top:164.88px;font-size:9px;font-weight:normal;color:#1e1e1e;letter-spacing:-0.368px;transform:scaleX(0.9006)">NoName</span>
<span class="t" style="left:501.00px;top:185.88px;font-size:9px;font-weight:bold;color:#19646c;letter-spacing:0.000px;-webkit-text-stroke:0.15px currentColor;transform:scaleX(1.0114)">Текущий сканер</span>
<span class="t" style="left:495.70px;top:219.88px;font-size:9px;font-weight:normal;color:#1e1e1e;letter-spacing:-0.136px;transform:scaleX(0.9556)">Настройки сканера</span>
<span class="t" style="left:463.00px;top:238.88px;font-size:9px;font-weight:bold;color:#19646c;letter-spacing:-0.057px;-webkit-text-stroke:0.15px currentColor;transform:scaleX(0.9833)">Настройки сканирования</span>
<span class="t" style="left:439.00px;top:259.88px;font-size:9px;font-weight:normal;color:#1e1e1e;letter-spacing:-0.115px;transform:scaleX(0.9639)">Режим вывода:</span>
<span class="t" style="left:501.70px;top:258.88px;font-size:9px;font-weight:normal;color:#1e1e1e;letter-spacing:-0.201px;transform:scaleX(0.9266)">Black &amp; White</span>
<span class="t" style="left:445.60px;top:275.88px;font-size:9px;font-weight:normal;color:#1e1e1e;letter-spacing:-0.164px;transform:scaleX(0.9420)">Разрешение (dpi):</span>
<span class="t" style="left:516.40px;top:274.88px;font-size:9px;font-weight:normal;color:#1e1e1e;letter-spacing:-0.271px;transform:scaleX(0.9143)">200</span>
<span class="t" style="left:455.00px;top:288.88px;font-size:9px;font-weight:normal;color:#1e1e1e;letter-spacing:-0.152px;transform:scaleX(0.9504)">Выравнивание по горизонтали</span>
<span class="t" style="left:455.00px;top:300.88px;font-size:9px;font-weight:normal;color:#1e1e1e;letter-spacing:-0.126px;transform:scaleX(0.9571)">Пропустить пустой лист</span>
<span class="t" style="left:501.00px;top:318.88px;font-size:9px;font-weight:bold;color:#19646c;letter-spacing:0.000px;-webkit-text-stroke:0.15px currentColor;transform:scaleX(1.0035)">Формат вывода</span>
<span class="t" style="left:453.20px;top:335.38px;font-size:9px;font-weight:normal;color:#1e1e1e;letter-spacing:-0.187px;transform:scaleX(0.9415)">Формат файла:</span>
<span class="t" style="left:516.40px;top:336.88px;font-size:9px;font-weight:normal;color:#1e1e1e;letter-spacing:-0.352px;transform:scaleX(0.9046)">JPEG</span>
<span class="t" style="left:439.70px;top:353.88px;font-size:9px;font-weight:normal;color:#1e1e1e;letter-spacing:-0.043px;transform:scaleX(0.9856)">Качество:</span>
<span class="t" style="left:484.70px;top:353.88px;font-size:9px;font-weight:normal;color:#1e1e1e;letter-spacing:-0.149px;transform:scaleX(0.9524)">Нормальное качество</span>
<span class="t" style="left:463.50px;top:370.88px;font-size:9px;font-weight:normal;color:#1e1e1e;letter-spacing:-0.210px;transform:scaleX(0.9341)">Расширение:</span>
<span class="t" style="left:518.40px;top:371.88px;font-size:9px;font-weight:normal;color:#1e1e1e;letter-spacing:-0.552px;transform:scaleX(0.8447)">JPEG</span>
<span class="t" style="left:472.50px;top:398.88px;font-size:9px;font-weight:bold;color:#19646c;letter-spacing:-0.039px;-webkit-text-stroke:0.15px currentColor;transform:scaleX(0.9886)">Настройки сохранения</span>
<span class="t" style="left:440.00px;top:415.38px;font-size:9px;font-weight:normal;color:#1e1e1e;letter-spacing:-0.277px;transform:scaleX(0.9123)">Имя файла:</span>
<span class="t" style="left:442.70px;top:427.88px;font-size:9px;font-weight:normal;color:#1e1e1e;letter-spacing:-0.191px;transform:scaleX(0.9394)">14_06_2016_scandoc</span>
<span class="t" style="left:441.90px;top:443.88px;font-size:9px;font-weight:normal;color:#1e1e1e;letter-spacing:-0.067px;transform:scaleX(0.9773)">Сохранить в папку:</span>
<span class="t" style="left:182.70px;top:465.04px;font-size:10px;font-weight:normal;color:#1e1e1e;letter-spacing:-0.234px;transform:scaleX(0.9295)">Размер изображения: 0x0</span>
<span class="t" style="left:544.50px;top:465.04px;font-size:10px;font-weight:normal;color:#1e1e1e;letter-spacing:-0.216px;transform:scaleX(0.9180)">Localizati</span>
</body></html>
